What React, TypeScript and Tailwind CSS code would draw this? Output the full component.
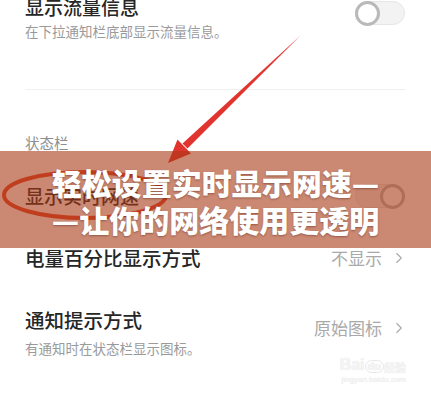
import { ChevronRight } from "lucide-react";

const FONT = "font-['Noto_Sans_CJK_SC','Noto_Sans',sans-serif]";

function Toggle({ on = false }: { on?: boolean }) {
  return (
    <div className="relative w-[50px] h-[24px] rounded-full bg-[#f3f3f3] border border-[#e6e6e6]">
      <div
        className={`absolute top-[-1px] w-[25px] h-[25px] rounded-full bg-white border-[3px] border-[#b9b9b9] ${
          on ? "right-[-1px]" : "left-[-1px]"
        }`}
      />
    </div>
  );
}

function Value({ text }: { text: string }) {
  return (
    <div className="flex items-center gap-[8px] text-[#a9a9a9]">
      <span className="text-[17px] leading-[28px]">{text}</span>
      <ChevronRight className="w-[18px] h-[18px] -mr-[3px]" strokeWidth={1.5} />
    </div>
  );
}

export default function App() {
  return (
    <div className={`relative w-[431px] h-[400px] overflow-hidden bg-white ${FONT}`}>
      <div className="px-[25px] pr-[26px]">
        {/* 显示流量信息 */}
        <div className="-mt-[7px] flex justify-between items-start">
          <div>
            <div className="text-[19px] leading-[28px] font-medium text-[#262626]">显示流量信息</div>
            <div className="text-[13.5px] leading-[20px] text-[#9a9a9a]">在下拉通知栏底部显示流量信息。</div>
          </div>
          <div className="mt-[8px]">
            <Toggle />
          </div>
        </div>

        <div className="mt-[48px] h-px bg-[#f0f0f0]" />

        <div className="mt-[43px] text-[14.5px] leading-[20px] text-[#8e8e8e]">状态栏</div>

        {/* 显示实时网速 */}
        <div className="mt-[29px] flex justify-between items-center">
          <div className="text-[19px] leading-[28px] font-medium text-[#262626]">显示实时网速</div>
          <Toggle on />
        </div>

        {/* 电量百分比显示方式 */}
        <div className="mt-[34px] flex justify-between items-center">
          <div className="text-[19.5px] leading-[28px] font-medium text-[#262626]">电量百分比显示方式</div>
          <Value text="不显示" />
        </div>

        {/* 通知提示方式 */}
        <div className="mt-[34px] flex justify-between items-start">
          <div>
            <div className="text-[19.5px] leading-[28px] font-medium text-[#262626]">通知提示方式</div>
            <div className="mt-[4px] text-[13.5px] leading-[20px] text-[#9a9a9a]">有通知时在状态栏显示图标。</div>
          </div>
          <div className="mt-[8px]">
            <Value text="原始图标" />
          </div>
        </div>
      </div>

      {/* annotation: arrow + ellipse */}
      <svg className="absolute inset-0 pointer-events-none" width="431" height="400" viewBox="0 0 431 400">
        <polygon points="300.5,35.5 187.5,148.5 182.5,143.5" fill="#e2342f" />
        <polygon points="168,163 191,153.5 177.5,139.5" fill="#e2342f" />
        <ellipse cx="85" cy="195" rx="81" ry="23" fill="none" stroke="#e3432c" strokeWidth="4" />
      </svg>

      {/* banner */}
      <div className="absolute inset-x-0 top-[151px] h-[97px] bg-[rgba(168,58,22,0.6)] flex flex-col items-center justify-center pt-[2px]">
        <div className="text-white font-black text-[30px] leading-[37px] whitespace-nowrap [text-shadow:0_1px_2px_rgba(80,30,20,0.45)]">
          轻松设置实时显示网速—
        </div>
        <div className="text-white font-black text-[30px] leading-[37px] whitespace-nowrap [text-shadow:0_1px_2px_rgba(80,30,20,0.45)]">
          —让你的网络使用更透明
        </div>
      </div>

      {/* watermark */}
      <div className="absolute right-[25px] top-[357px] flex flex-col items-end text-[#f5f5f5] font-['Liberation_Sans',sans-serif] [text-shadow:0_0_1px_#dadada]">
        <div className="flex items-end leading-none">
          <span className="text-[16px] font-bold">Bai</span>
          <span className="text-[11px] font-bold px-[2px] border border-[#e8e8e8] rounded-full">du</span>
          <span className={`text-[11px] font-bold ${FONT}`}>经验</span>
        </div>
        <div className="text-[8px] leading-[12px] mt-[1px]">jingyan.baidu.com</div>
      </div>
    </div>
  );
}
